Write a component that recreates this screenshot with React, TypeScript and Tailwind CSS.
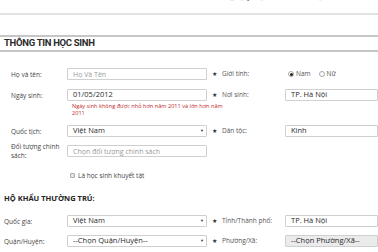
import React from "react";

const font = { fontFamily: '"Open Sans", "Noto Sans", sans-serif' };

const Star = () => (
  <div className="flex items-center justify-center text-[6px] leading-none text-[#333]">★</div>
);

const Input = ({
  value,
  placeholder,
  select,
  disabled,
  className = "",
}: {
  value?: string;
  placeholder?: string;
  select?: boolean;
  disabled?: boolean;
  className?: string;
}) => (
  <div
    className={`relative flex h-[12px] items-center rounded-[1px] border border-[#cfcfcf] pl-[5px] text-[7.5px] leading-none ${
      disabled ? "bg-[#ebebeb]" : "bg-white"
    } ${className}`}
  >
    {value ? (
      <span className="text-[#2a2a2a]">{value}</span>
    ) : (
      <span className="text-[7px] text-[#9a9a9a]">{placeholder}</span>
    )}
    {select && (
      <span className="absolute right-[2px] top-[3px] text-[4px] text-[#333]">▼</span>
    )}
  </div>
);

const Row = ({
  label,
  children,
  label2,
  right,
  indent = true,
  className = "",
}: {
  label: React.ReactNode;
  children: React.ReactNode;
  label2?: string;
  right?: React.ReactNode;
  indent?: boolean;
  className?: string;
}) => (
  <div className={`grid grid-cols-[67px_140px_15px_63px_93px] items-center ${className}`}>
    <div className={`text-[6.5px] leading-[9px] text-[#444] ${indent ? "pl-[11px]" : "pl-[4px]"}`}>
      {label}
    </div>
    {children}
    {label2 ? <Star /> : <div />}
    <div className="text-[6.5px] text-[#555]">{label2}</div>
    <div>{right}</div>
  </div>
);

const Radio = ({ checked, label }: { checked?: boolean; label: string }) => (
  <div className="flex items-center gap-[2px]">
    <span className="flex h-[6px] w-[6px] items-center justify-center rounded-full border border-[#aaa] bg-white">
      {checked && <span className="h-[3px] w-[3px] rounded-full bg-[#222]" />}
    </span>
    <span className="text-[6.5px] text-[#555]">{label}</span>
  </div>
);

export default function App() {
  return (
    <div className="h-[252px] w-[378px] overflow-hidden bg-white" style={font}>
      <div className="h-[13px] overflow-hidden">
        <div className="-mt-[10px] pl-[215px] text-[8px] leading-[12px] text-[#ddd]">
          Đăng ký <span className="text-[#222]">ý</span> tuyển sinh trực tuyến
        </div>
      </div>
      <div className="h-[2px] bg-[#e2e2e2]" />

      <div className="mt-[20px] flex h-[17px] items-center border-y-2 border-[#c6c6c6] pl-[4px]">
        <span
          className="text-[9.5px] font-bold tracking-[-0.3px] text-[#2a2a2a]"
          style={{ fontFamily: "Roboto, sans-serif" }}
        >
          THÔNG TIN HỌC SINH
        </span>
      </div>

      <Row
        className="mt-[16px]"
        label="Họ và tên:"
        label2="Giới tính:"
        right={
          <div className="flex items-center gap-[8px] pl-[3px]">
            <Radio checked label="Nam" />
            <Radio label="Nữ" />
          </div>
        }
      >
        <Input placeholder="Họ Và Tên" />
      </Row>

      <Row className="mt-[9px]" label="Ngày sinh:" label2="Nơi sinh:" right={<Input value="TP. Hà Nội" />}>
        <Input value="01/05/2012" />
      </Row>
      <div className="ml-[72px] mt-[2px] w-[158px] text-[5.6px] leading-[6.5px] text-[#c0282b]">
        Ngày sinh không được nhỏ hơn năm 2011 và lớn hơn năm 2011
      </div>

      <Row className="mt-[9px]" label="Quốc tịch:" label2="Dân tộc:" right={<Input value="Kinh" />}>
        <Input value="Việt Nam" select />
      </Row>

      <Row
        className="mt-[5px]"
        label={
          <>
            Đối tượng chính
            <br />
            sách:
          </>
        }
      >
        <Input placeholder="Chọn đối tượng chính sách" className="border-[#b8b8b8]" />
      </Row>

      <div className="ml-[70px] mt-[11px] flex items-center gap-[3px]">
        <span className="h-[5px] w-[5px] rounded-[1px] border border-[#aaa] bg-[#e6e6e6]" />
        <span className="text-[6.5px] text-[#444]">Là học sinh khuyết tật</span>
      </div>

      <div className="mt-[12px] pl-[4px] text-[7.5px] font-bold text-[#222]">HỘ KHẨU THƯỜNG TRÚ:</div>

      <Row
        className="mt-[11px]"
        indent={false}
        label="Quốc gia:"
        label2="Tỉnh/Thành phố:"
        right={<Input value="TP. Hà Nội" />}
      >
        <Input value="Việt Nam" select />
      </Row>

      <Row
        className="mt-[8px]"
        indent={false}
        label="Quận/Huyện:"
        label2="Phường/Xã:"
        right={<Input value="--Chọn Phường/Xã--" disabled />}
      >
        <Input value="--Chọn Quận/Huyện--" select />
      </Row>
    </div>
  );
}
